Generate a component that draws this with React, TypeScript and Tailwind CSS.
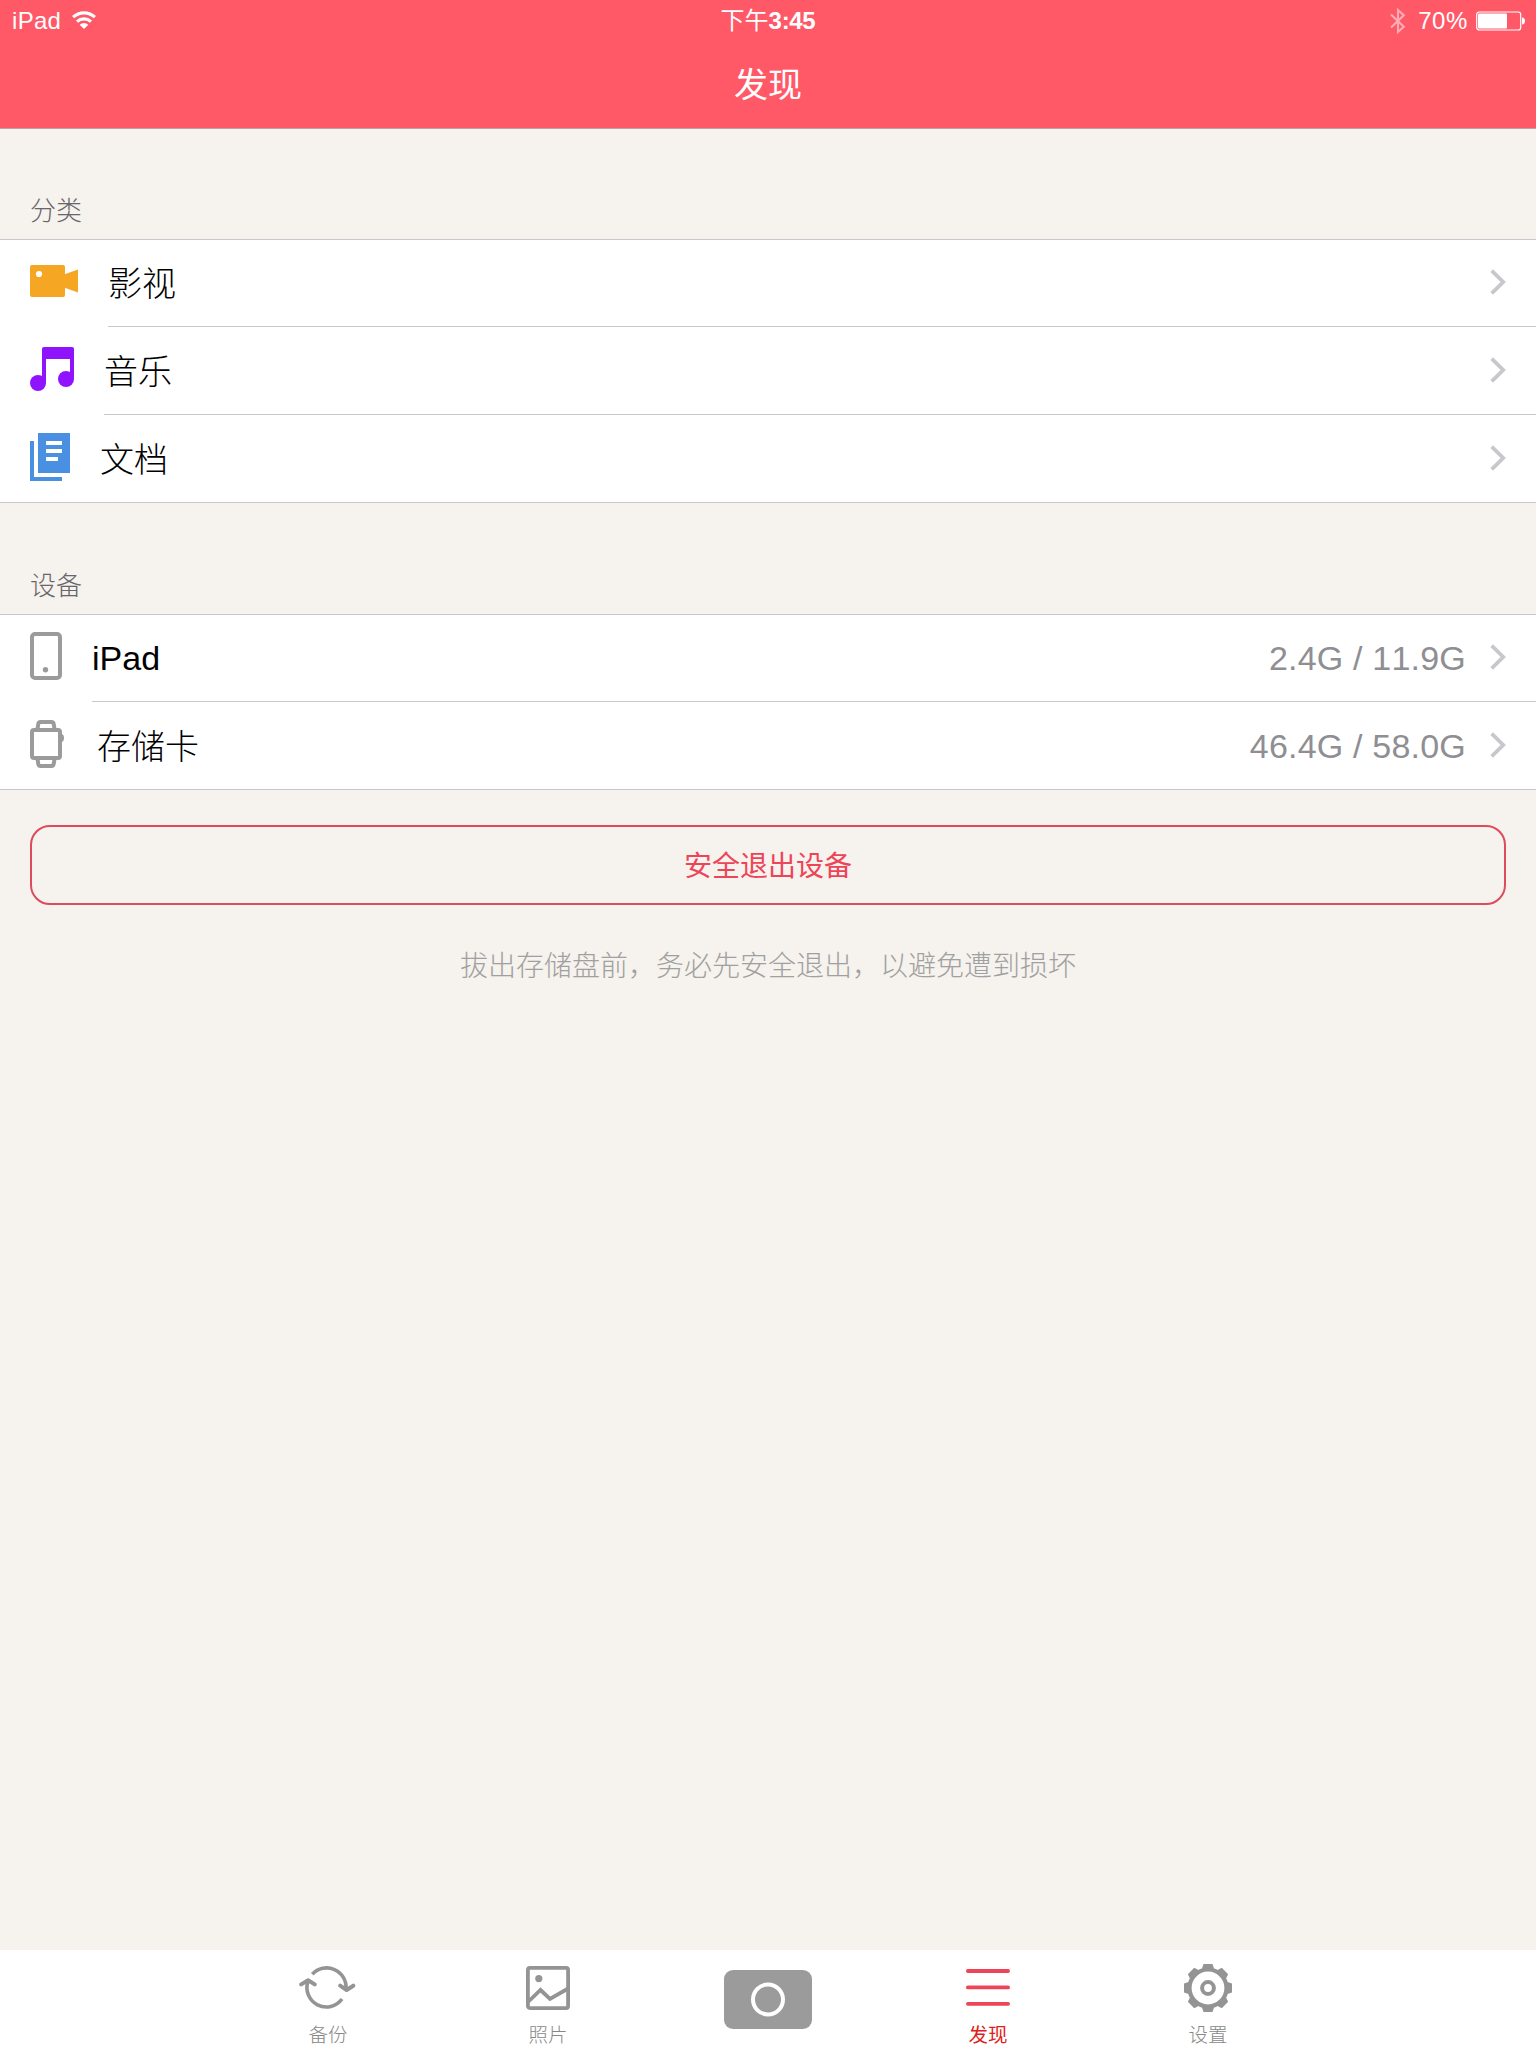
import React from 'react';

const font = 'font-["Liberation_Sans","Noto_Sans_CJK_SC",sans-serif]';

const WifiIcon = () => (
  <svg width="24" height="18" viewBox="0 0 24 18" fill="none" stroke="white" strokeWidth="3.2">
    <path d="M1.1 6.2a16 16 0 0 1 21.8 0" />
    <path d="M5 10.6a10.4 10.4 0 0 1 14 0" />
    <path d="M12 18l-4.3-4.3a6.2 6.2 0 0 1 8.6 0z" fill="white" stroke="none" />
  </svg>
);

const BluetoothIcon = () => (
  <svg width="16" height="28" viewBox="0 0 16 28" fill="none" stroke="white" strokeWidth="2.1" opacity="0.5">
    <path d="M1 7.500l12.800 12.300-5.800 5.200V3l5.800 5.200L1 20.500" />
  </svg>
);

const BatteryIcon = () => (
  <svg width="50" height="20" viewBox="0 0 50 20">
    <rect x="0.7" y="1" width="44" height="18" rx="2.6" fill="none" stroke="white" strokeWidth="1.2" />
    <rect x="2" y="2.5" width="29" height="15" rx="1" fill="white" />
    <path d="M46 6.5c4 0 4 7 0 7z" fill="white" />
  </svg>
);

const VideoIcon = () => (
  <svg width="48" height="32" viewBox="0 0 48 32" fill="#f5a623">
    <rect width="35" height="32" rx="2" />
    <path d="M34 9.5L48 4.5v23l-14-5z" />
    <circle cx="9" cy="9" r="3.1" fill="white" />
  </svg>
);

const MusicIcon = () => (
  <svg width="44" height="44" viewBox="0 0 44 44" fill="#9013fe">
    <path d="M14 0h28a2 2 0 0 1 2 2v30h-4V12H16v24h-4V2a2 2 0 0 1 2-2z" />
    <circle cx="8" cy="36" r="8" />
    <circle cx="36" cy="32" r="8" />
  </svg>
);

const DocumentIcon = () => (
  <svg width="40" height="48" viewBox="0 0 40 48" fill="#4a90e2">
    <path d="M8 0h32v40H8z" />
    <path d="M0 8h4v36h28v4H0z" />
    <path d="M16 8h16v4H16zM16 16h16v4H16zM16 24h12v4H16z" fill="white" />
  </svg>
);

const TabletIcon = () => (
  <svg width="32" height="48" viewBox="0 0 32 48">
    <rect x="2" y="2" width="28" height="44" rx="3" fill="none" stroke="#9b9b9b" strokeWidth="4" />
    <circle cx="15.5" cy="37.7" r="2.7" fill="#9b9b9b" />
  </svg>
);

const WatchIcon = () => (
  <svg width="34" height="48" viewBox="0 0 34 48" fill="none" stroke="#9b9b9b" strokeWidth="4">
    <rect x="2" y="10" width="28" height="28" rx="2" />
    <path d="M7.5 9l.8-5Q8.600 2 10.500 2h11q1.900 0 2.200 2l.8 5M7.500 39l.8 5q.3 2 2.200 2h11q1.900 0 2.200-2l.8-5" />
    <path d="M31 14q3 0 3 4t-3 4z" fill="#9b9b9b" stroke="none" />
  </svg>
);

const Chevron = () => (
  <svg width="16" height="26" viewBox="0 0 16 26" fill="none" stroke="#c7c7cc" strokeWidth="3.8">
    <path d="M1.7 1.6L13.2 13L1.7 24.4" />
  </svg>
);

const BackupIcon = () => (
  <svg width="58" height="48" viewBox="0 0 58 48" fill="none" stroke="#949494" strokeWidth="3.6">
    <path d="M13.3 10.3A19.4 19.4 0 0 1 47 25M43 35A19.4 19.4 0 0 1 8.900 17.500" />
    <path d="M2.2 20.400l6.900-4.100 6.600 4.100M41.200 21.700l6.400 4.300 6.700-4.300" strokeWidth="4" strokeLinecap="round" strokeLinejoin="round" />
  </svg>
);

const PhotoIcon = () => (
  <svg width="44" height="48" viewBox="0 0 44 48" fill="none" stroke="#949494" strokeWidth="3.8">
    <rect x="1.9" y="3.9" width="40.2" height="40.2" rx="2" />
    <circle cx="12.800" cy="14.600" r="3.6" fill="#949494" stroke="none" />
    <path d="M2 38l12.500-12 9.500 9L43 24" />
  </svg>
);

const MenuIcon = () => (
  <svg width="44" height="48" viewBox="0 0 44 48" stroke="#ee4458" strokeWidth="3.8" strokeLinecap="round">
    <path d="M1.900 7h40.200M1.900 23.400h40.200M1.900 39.800h40.200" />
  </svg>
);

const GearIcon = () => (
  <svg width="48" height="48" viewBox="0 0 48 48" fill="none" stroke="#949494">
    <circle cx="24" cy="24" r="18.500" strokeWidth="4.200" />
    <circle cx="24" cy="24" r="5.900" strokeWidth="4" />
    <g fill="#949494" stroke="none">
      {[0, 45, 90, 135, 180, 225, 270, 315].map(angle => (
        <path key={angle} d="M17.5 6l2-6h9l2 6z" transform={`rotate(${angle} 24 24)`} />
      ))}
    </g>
  </svg>
);

const CameraIcon = () => (
  <svg width="88" height="59" viewBox="0 0 88 59">
    <rect width="88" height="59" rx="9" fill="#9b9b9b" />
    <circle cx="44" cy="29.5" r="15" fill="none" stroke="white" strokeWidth="4" />
  </svg>
);

interface RowProps {
  icon: React.ReactNode;
  label: string;
  value?: string;
  gap?: string;
  height: string;
  iconPad?: string;
  labelPad?: string;
  divider?: boolean;
}

const Row: React.FC<RowProps> = ({
  icon,
  label,
  value,
  gap = 'ml-[30px]',
  height,
  iconPad = 'pb-[3px]',
  labelPad = 'pt-0.5',
  divider = true,
}) => (
  <div className={`flex items-stretch pl-[30px] ${height}`}>
    <div className={`flex items-center ${iconPad}`}>{icon}</div>
    <div className={`flex flex-1 items-center pr-[30px] ${gap} ${divider ? 'border-b border-[#c8c7cc]' : ''}`}>
      <span className={`flex-1 text-[34px] leading-[50px] font-light text-black ${labelPad}`}>{label}</span>
      {value && (
        <span className="mr-6 text-[34px] leading-[50px] tracking-[0.2px] text-[#8e8e93] [font-kerning:none]">{value}</span>
      )}
      <div className="pb-0.5"><Chevron /></div>
    </div>
  </div>
);

const SectionTitle: React.FC<{ children: React.ReactNode; height: string }> = ({ children, height }) => (
  <h2 className={`flex items-end pb-[9px] pl-[30px] text-[26px] leading-[38px] font-light text-[#66666b] ${height}`}>
    {children}
  </h2>
);

const tabs = [
  { label: '备份', icon: <BackupIcon /> },
  { label: '照片', icon: <PhotoIcon /> },
  { label: '', icon: <CameraIcon /> },
  { label: '发现', icon: <MenuIcon />, active: true },
  { label: '设置', icon: <GearIcon /> },
];

const App: React.FC = () => {
  return (
    <div className={`flex h-[2048px] w-[1536px] flex-col bg-[#f6f2ed] ${font}`}>
      <header className="h-[129px] border-b border-[#bda3a3] bg-[#ff5968] text-white">
        <div className="grid h-[42px] grid-cols-3 items-center text-2xl leading-[42px]">
          <div className="flex items-center pl-3">
            <span className="tracking-[0.3px]">iPad</span>
            <div className="ml-[11px] pb-0.5"><WifiIcon /></div>
          </div>
          <div className="text-center">下午<span className="font-bold tracking-[-0.3px]">3:45</span></div>
          <div className="flex items-center justify-end pr-[10px]">
            <BluetoothIcon />
            <span className="mr-2 ml-3 tracking-[0.6px]">70%</span>
            <BatteryIcon />
          </div>
        </div>
        <h1 className="text-center text-[34px] leading-[86px]">发现</h1>
      </header>

      <main className="flex-1">
        <SectionTitle height="h-[110px]">分类</SectionTitle>
        <div className="border-y border-[#c8c7cc] bg-white">
          <Row icon={<VideoIcon />} label="影视" height="h-[87px]" iconPad="pb-[5px]" />
          <Row icon={<MusicIcon />} label="音乐" height="h-[88px]" iconPad="pb-1" />
          <Row icon={<DocumentIcon />} label="文档" height="h-[87px]" divider={false} />
        </div>

        <SectionTitle height="h-[111px]">设备</SectionTitle>
        <div className="border-y border-[#c8c7cc] bg-white">
          <Row icon={<TabletIcon />} label="iPad" value="2.4G / 11.9G" height="h-[87px]" iconPad="pb-[5px]" labelPad="pt-0" />
          <Row icon={<WatchIcon />} label="存储卡" value="46.4G / 58.0G" gap="ml-[33px]" height="h-[87px]" divider={false} />
        </div>

        <div className="px-[30px] pt-[35px]">
          <button className="h-20 w-full rounded-[20px] border-2 border-[#de4b5c] pt-[3px] text-[28px] text-[#ee4458]">
            安全退出设备
          </button>
        </div>
        <p className="mt-[42px] text-center text-[28px] leading-10 font-light text-[#a0a0a0]">
          拔出存储盘前，务必先安全退出，以避免遭到损坏
        </p>
      </main>

      <nav className="flex h-[98px] justify-center bg-white">
        {tabs.map((tab, i) => (
          <div key={i} className="flex w-[220px] flex-col items-center">
            <div className={tab.label ? 'mt-[14px]' : 'mt-5'}>{tab.icon}</div>
            {tab.label && (
              <span className={`mt-[9px] text-[19.5px] leading-7 ${tab.active ? 'text-[#e02020]' : 'font-light text-[#888888]'}`}>
                {tab.label}
              </span>
            )}
          </div>
        ))}
      </nav>
    </div>
  );
};

export default App;
